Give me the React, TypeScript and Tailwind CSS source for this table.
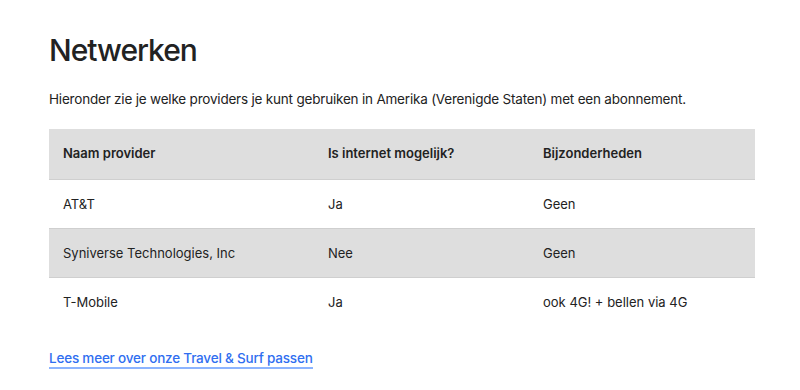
const rows = [
  { name: 'AT&T', internet: 'Ja', details: 'Geen' },
  { name: 'Syniverse Technologies, Inc', internet: 'Nee', details: 'Geen' },
  { name: 'T-Mobile', internet: 'Ja', details: 'ook 4G! + bellen via 4G' },
];

export default function App() {
  return (
    <div className="min-h-[390px] bg-white px-[49px] pt-[30px] font-['Inter',sans-serif] text-[#222]">
      <h1 className="text-[30px] font-medium leading-[40px] tracking-[-1px]">Netwerken</h1>
      <p className="mt-[18px] text-[13.5px] leading-[22px] tracking-[-0.2px]">
        Hieronder zie je welke providers je kunt gebruiken in Amerika (Verenigde Staten) met een abonnement.
      </p>
      <table className="mt-[19px] w-[706px] table-fixed border-collapse text-[13px]">
        <colgroup>
          <col className="w-[265px]" />
          <col className="w-[215px]" />
          <col />
        </colgroup>
        <thead>
          <tr className="h-[50px] border-b border-[#cfcfcf] bg-[#dedede] text-left">
            <th className="px-[14px] font-semibold">Naam provider</th>
            <th className="px-[14px] font-semibold">Is internet mogelijk?</th>
            <th className="px-[14px] font-semibold">Bijzonderheden</th>
          </tr>
        </thead>
        <tbody>
          {rows.map((row, i) => (
            <tr
              key={row.name}
              className={
                i === rows.length - 1
                  ? 'h-[49px] bg-white'
                  : i % 2 === 1
                    ? 'h-[49px] border-b border-[#cfcfcf] bg-[#dedede]'
                    : 'h-[49px] border-b border-[#cfcfcf] bg-white'
              }
            >
              <td className="px-[14px] pt-[2px]">{row.name}</td>
              <td className="px-[14px] pt-[2px]">{row.internet}</td>
              <td className="px-[14px] pt-[2px]">{row.details}</td>
            </tr>
          ))}
        </tbody>
      </table>
      <a
        href="#"
        className="mt-[23px] inline-block border-b-2 border-[#8cb4ff] text-[13.5px] font-medium leading-[18px] tracking-[-0.2px] text-[#2f6ef0]"
      >
        Lees meer over onze Travel &amp; Surf passen
      </a>
    </div>
  );
}
